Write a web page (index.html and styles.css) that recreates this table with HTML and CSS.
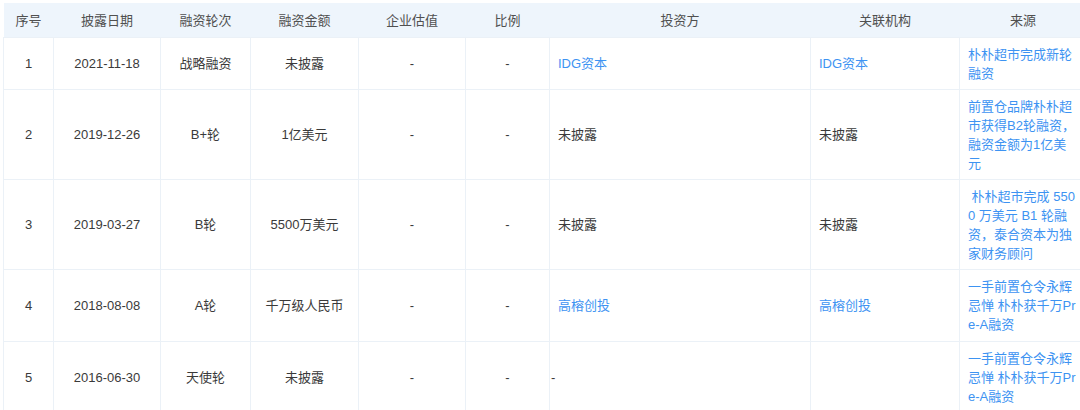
FILE: index.html
```html
<!DOCTYPE html>
<html lang="zh-CN">
<head>
<meta charset="utf-8">
<link rel="stylesheet" href="styles.css">
</head>
<body>
<div class="wrap">
<table class="fin">
<colgroup>
<col class="c1"><col class="c2"><col class="c3"><col class="c4"><col class="c5"><col class="c6"><col class="c7"><col class="c8"><col class="c9">
</colgroup>
<thead>
<tr><th>序号</th><th>披露日期</th><th>融资轮次</th><th>融资金额</th><th>企业估值</th><th>比例</th><th>投资方</th><th>关联机构</th><th>来源</th></tr>
</thead>
<tbody>
<tr class="r2">
<td>1</td><td>2021-11-18</td><td>战略融资</td><td>未披露</td><td>-</td><td>-</td>
<td class="l"><a>IDG资本</a></td><td class="l"><a>IDG资本</a></td><td class="l src"><a>朴朴超市完成新轮融资</a></td>
</tr>
<tr class="r4">
<td>2</td><td>2019-12-26</td><td>B+轮</td><td>1亿美元</td><td>-</td><td>-</td>
<td class="l">未披露</td><td class="l">未披露</td><td class="l src"><a>前置仓品牌朴朴超市获得B2轮融资，融资金额为1亿美元</a></td>
</tr>
<tr class="r4">
<td>3</td><td>2019-03-27</td><td>B轮</td><td>5500万美元</td><td>-</td><td>-</td>
<td class="l">未披露</td><td class="l">未披露</td><td class="l src"><a>&nbsp;朴朴超市完成 5500 万美元 B1 轮融资，泰合资本为独家财务顾问</a></td>
</tr>
<tr class="r3">
<td>4</td><td>2018-08-08</td><td>A轮</td><td>千万级人民币</td><td>-</td><td>-</td>
<td class="l"><a>高榕创投</a></td><td class="l"><a>高榕创投</a></td><td class="l src"><a>一手前置仓令永辉忌惮 朴朴获千万Pre-A融资</a></td>
</tr>
<tr class="r3">
<td>5</td><td>2016-06-30</td><td>天使轮</td><td>未披露</td><td>-</td><td>-</td>
<td class="l tight">-</td><td class="l"></td><td class="l src"><a>一手前置仓令永辉忌惮 朴朴获千万Pre-A融资</a></td>
</tr>
</tbody>
</table>
</div>
</body>
</html>
```
FILE: styles.css
```css
html, body {
  margin: 0;
  padding: 0;
  background: #ffffff;
  overflow: hidden;
}
.wrap {
  padding: 3px 0 0 3px;
  width: 1100px;
}
.fin {
  table-layout: fixed;
  border-collapse: collapse;
  width: 1083px;
  font-family: "Liberation Sans", "Noto Sans CJK SC", sans-serif;
  font-size: 13px;
  line-height: 19px;
  color: #3a3a3a;
}
.c1 { width: 50px; }
.c2 { width: 107px; }
.c3 { width: 90px; }
.c4 { width: 108px; }
.c5 { width: 107px; }
.c6 { width: 84px; }
.c7 { width: 261px; }
.c8 { width: 149px; }
.c9 { width: 127px; }
.fin th {
  background: #eef5fc;
  color: #505050;
  font-weight: normal;
  height: 34px;
  padding: 0 4px;
  text-align: center;
  vertical-align: middle;
  border: 0;
}
.fin td {
  border: 1px solid #ebf1f7;
  padding: 6px 8px;
  text-align: center;
  vertical-align: middle;
  word-break: break-all;
}
.fin td.l { text-align: left; }
.fin td.src { padding-right: 10px; }
.fin td.tight { padding-left: 1px; }
.fin a {
  color: #3d93f2;
  text-decoration: none;
}
.r2 td { height: 39px; }
.r3 td { height: 59px; }
.r4 td { height: 77px; }
```
